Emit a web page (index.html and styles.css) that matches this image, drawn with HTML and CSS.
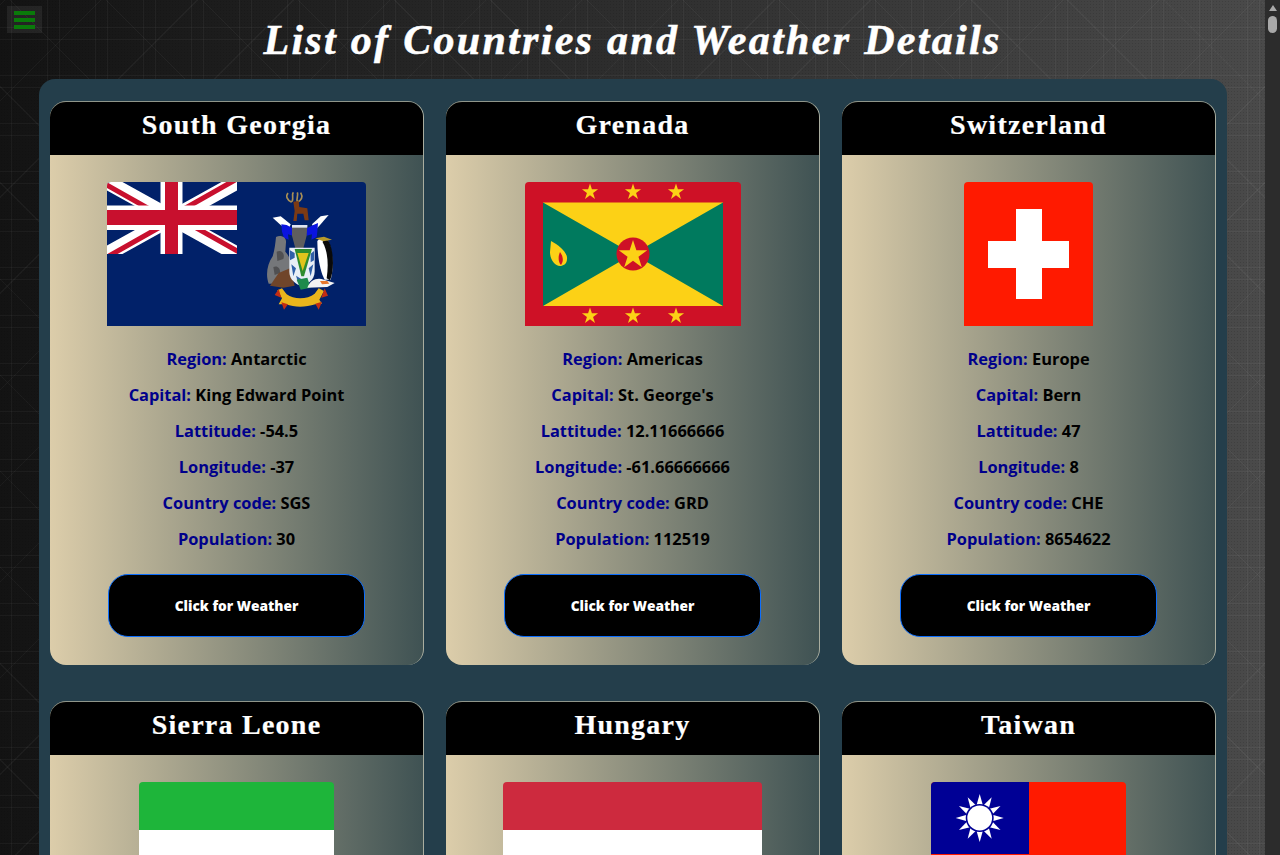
FILE: index.html
```html
<!DOCTYPE html>
<html lang="en">
<head>
  <meta charset="UTF-8" />
  <meta name="viewport" content="width=device-width, initial-scale=1.0" />
  <title>List of Countries and Weather Details</title>
  <link rel="stylesheet" href="styles.css">
</head>
<body>
  <div class="app">
    <main class="page">
      <button class="menu-btn" aria-label="Menu"><span></span><span></span><span></span></button>
      <h1 class="page-title">List of Countries and Weather Details</h1>

      <section class="country-list">
        <article class="card">
          <h2 class="card-title">South Georgia</h2>
          <div class="card-body">
            <svg class="flag" width="259" height="144" viewBox="0 0 259 144">
              <defs>
                <clipPath id="jack"><rect width="130" height="72"/></clipPath>
              </defs>
              <rect width="259" height="144" fill="#012169"/>
              <!-- union jack -->
              <g clip-path="url(#jack)">
                <path d="M0 0L130 72M130 0L0 72" stroke="#fff" stroke-width="15"/>
                <path d="M-2 2L60 37M132 70L70 35M128 -2L68 32M2 74L62 40" stroke="#c8102e" stroke-width="5"/>
                <path d="M53.5 0H75.5V23.5H130V48H75.5V72H53.5V48H0V23.5H53.5Z" fill="#fff"/>
                <path d="M58 0H71V28H130V43H71V72H58V43H0V28H58Z" fill="#c8102e"/>
              </g>
              <!-- coat of arms -->
              <g transform="translate(153 3) scale(.3333)">
                <path d="M95 52C82 46 76 34 84 24M96 50C102 40 94 30 100 22M112 52C124 46 130 36 122 23M112 50C108 40 116 32 112 22" fill="none" stroke="#a98f55" stroke-width="5"/>
                <path d="M100 50L116 48L118 66L142 70L146 106H134L130 86H112L110 108H100L104 78Z" fill="#7c3a14"/>
                <path d="M38 98L62 94L92 118L84 138L62 120Z" fill="#fff"/>
                <path d="M206 90L182 94L156 118L164 138L182 118Z" fill="#fff"/>
                <path d="M64 118L80 120L102 132L98 152L84 148L86 164L72 158L66 140Z" fill="#0a14e0"/>
                <path d="M174 114L160 120L136 132L140 152L156 148L154 164L170 156L172 140Z" fill="#0a14e0"/>
                <path d="M96 120H142L140 152L130 190H106L96 152Z" fill="#5e5e5e"/>
                <rect x="96" y="120" width="46" height="8" fill="#dfe4f2"/>
                <path d="M48 156C62 148 80 156 78 172L76 200C90 214 98 240 94 268L66 296H26C16 270 22 236 38 214C44 194 46 176 48 156Z" fill="#75777a"/>
                <path d="M50 200C64 192 76 206 70 222L52 228ZM40 246C52 240 62 250 60 264L44 270Z" fill="#505052"/>
                <path d="M30 302L56 264L90 250L104 302L70 308Z" fill="#70452a"/>
                <path d="M88 188L164 188V260C164 284 142 298 126 304C108 298 88 284 88 260Z" fill="#e8eef6"/>
                <path d="M90 196L104 204V218L90 226ZM152 206L162 198V226L152 232ZM94 238L108 250L100 274ZM146 250L160 238L152 274ZM108 272L124 282L114 292Z" fill="#2f5fa8"/>
                <path d="M104 192H156L132 274H124Z" fill="#2e8b2e"/>
                <path d="M112 204H146L128 258Z" fill="#e0c41c"/>
                <path d="M110 284L142 278L152 308L122 314Z" fill="#1d8a4c"/>
                <path d="M142 308C150 286 170 276 192 284L224 294L202 306Z" fill="#f3f3f3"/>
                <path d="M180 288H202L208 296L186 298Z" fill="#e8772c"/>
                <path d="M172 168C182 156 198 158 206 170C218 200 222 250 212 284H194C180 260 172 210 172 168Z" fill="#fff"/>
                <path d="M190 162C204 160 210 172 214 190C222 225 220 262 210 286L200 280C206 240 204 200 188 172Z" fill="#0a0a0a"/>
                <path d="M166 160L192 155L216 164L190 169Z" fill="#b89a2a"/>
                <path d="M52 316L66 310L80 328C102 344 142 344 164 326L176 310L192 318L178 344L186 356L166 358C136 368 104 368 78 358L56 358L66 340Z" fill="#eab51c"/>
                <path d="M44 330L56 312L64 338ZM194 310L204 332L184 338ZM64 352L84 358L72 374ZM166 356L186 350L176 374Z" fill="#c32d12"/>
              </g>
            </svg>
            <p class="info"><b>Region:</b> Antarctic</p>
            <p class="info"><b>Capital:</b> King Edward Point</p>
            <p class="info"><b>Lattitude:</b> -54.5</p>
            <p class="info"><b>Longitude:</b> -37</p>
            <p class="info"><b>Country code:</b> SGS</p>
            <p class="info"><b>Population:</b> 30</p>
            <button class="weather-btn">Click for Weather</button>
          </div>
        </article>

        <article class="card">
          <h2 class="card-title">Grenada</h2>
          <div class="card-body">
            <svg class="flag" width="216" height="144" viewBox="0 0 216 144">
              <defs>
                <polygon id="gd-star" fill="#fcd116" points="0,-1 .225,-.309 .951,-.309 .363,.118 .588,.809 0,.382 -.588,.809 -.363,.118 -.951,-.309 -.225,-.309"/>
              </defs>
              <rect width="216" height="144" fill="#ce1126"/>
              <rect x="18" y="20.5" width="180" height="103.5" fill="#fcd116"/>
              <path d="M18 20.5L108 72L18 124ZM198 20.5L108 72L198 124Z" fill="#007a5e"/>
              <circle cx="108" cy="72" r="16.5" fill="#ce1126"/>
              <use href="#gd-star" transform="translate(108 73) scale(15)"/>
              <use href="#gd-star" transform="translate(65 10) scale(8.5)"/>
              <use href="#gd-star" transform="translate(108 10) scale(8.5)"/>
              <use href="#gd-star" transform="translate(151 10) scale(8.5)"/>
              <use href="#gd-star" transform="translate(65 134) scale(8.5)"/>
              <use href="#gd-star" transform="translate(108 134) scale(8.5)"/>
              <use href="#gd-star" transform="translate(151 134) scale(8.5)"/>
              <path d="M26 59C34 63 43 71 42 77C42 82 38 84 35 84C30 84 25 78 25 70Z" fill="#fcd116"/>
              <path d="M35 70C38 74 39 79 36 83C33 80 33 74 35 70Z" fill="#ce1126"/>
            </svg>
            <p class="info"><b>Region:</b> Americas</p>
            <p class="info"><b>Capital:</b> St. George's</p>
            <p class="info"><b>Lattitude:</b> 12.11666666</p>
            <p class="info"><b>Longitude:</b> -61.66666666</p>
            <p class="info"><b>Country code:</b> GRD</p>
            <p class="info"><b>Population:</b> 112519</p>
            <button class="weather-btn">Click for Weather</button>
          </div>
        </article>

        <article class="card">
          <h2 class="card-title">Switzerland</h2>
          <div class="card-body">
            <svg class="flag" width="129" height="144" viewBox="0 0 129 144">
              <rect width="129" height="144" fill="#ff1a00"/>
              <path d="M52 27H78V59H105V86H78V117H52V86H24V59H52Z" fill="#fff"/>
            </svg>
            <p class="info"><b>Region:</b> Europe</p>
            <p class="info"><b>Capital:</b> Bern</p>
            <p class="info"><b>Lattitude:</b> 47</p>
            <p class="info"><b>Longitude:</b> 8</p>
            <p class="info"><b>Country code:</b> CHE</p>
            <p class="info"><b>Population:</b> 8654622</p>
            <button class="weather-btn">Click for Weather</button>
          </div>
        </article>

        <article class="card">
          <h2 class="card-title">Sierra Leone</h2>
          <div class="card-body">
            <svg class="flag" width="195" height="144" viewBox="0 0 195 144">
              <rect width="195" height="48" fill="#1eb53a"/>
              <rect y="48" width="195" height="48" fill="#fff"/>
              <rect y="96" width="195" height="48" fill="#0072c6"/>
            </svg>
          </div>
        </article>

        <article class="card">
          <h2 class="card-title">Hungary</h2>
          <div class="card-body">
            <svg class="flag" width="259" height="144" viewBox="0 0 259 144">
              <rect width="259" height="48" fill="#cd2a3e"/>
              <rect y="48" width="259" height="48" fill="#fff"/>
              <rect y="96" width="259" height="48" fill="#436f4d"/>
            </svg>
          </div>
        </article>

        <article class="card">
          <h2 class="card-title">Taiwan</h2>
          <div class="card-body">
            <svg class="flag" width="195" height="144" viewBox="0 0 195 144">
              <defs>
                <polygon id="tw-ray" fill="#fff" points="0,-24 3.4,-12 -3.4,-12"/>
              </defs>
              <rect width="195" height="144" fill="#ff1a00"/>
              <rect width="98" height="72" fill="#000095"/>
              <g transform="translate(48.7 36)">
                <use href="#tw-ray"/>
                <use href="#tw-ray" transform="rotate(30)"/>
                <use href="#tw-ray" transform="rotate(60)"/>
                <use href="#tw-ray" transform="rotate(90)"/>
                <use href="#tw-ray" transform="rotate(120)"/>
                <use href="#tw-ray" transform="rotate(150)"/>
                <use href="#tw-ray" transform="rotate(180)"/>
                <use href="#tw-ray" transform="rotate(210)"/>
                <use href="#tw-ray" transform="rotate(240)"/>
                <use href="#tw-ray" transform="rotate(270)"/>
                <use href="#tw-ray" transform="rotate(300)"/>
                <use href="#tw-ray" transform="rotate(330)"/>
                <circle r="14" fill="#000095"/>
                <circle r="12.4" fill="#fff"/>
              </g>
            </svg>
          </div>
        </article>
      </section>
    </main>

    <div class="scrollbar">
      <span class="scroll-arrow"></span>
      <span class="scroll-thumb"></span>
    </div>
  </div>
</body>
</html>
```

FILE: styles.css
```css
html, body {
  margin: 0;
  padding: 0;
  width: 100%;
  height: 100%;
  overflow: hidden;
  font-family: 'Open Sans', 'Noto Sans', sans-serif;
}

.app {
  display: flex;
  height: 100%;
}

.page {
  position: relative;
  flex: 1;
  min-width: 0;
  overflow: hidden;
  background:
    radial-gradient(rgba(0, 0, 0, 0.12) 0.6px, transparent 0.8px) 0 0 / 3px 3px,
    repeating-linear-gradient(45deg, transparent 0 67px, rgba(255, 255, 255, 0.04) 67px 68px),
    repeating-linear-gradient(-45deg, transparent 0 67px, rgba(255, 255, 255, 0.04) 67px 68px),
    repeating-linear-gradient(90deg, transparent 0 11px, rgba(255, 255, 255, 0.04) 11px 12px, transparent 12px 47px, rgba(255, 255, 255, 0.04) 47px 48px),
    repeating-linear-gradient(0deg, transparent 0 11px, rgba(255, 255, 255, 0.04) 11px 12px, transparent 12px 47px, rgba(255, 255, 255, 0.04) 47px 48px),
    linear-gradient(to right, #131313, #2e2e2e 50%, #4a4a4a);
}

.menu-btn {
  position: absolute;
  top: 6px;
  left: 7px;
  width: 35px;
  height: 27px;
  padding: 5px 7px 4px;
  border: none;
  background: rgba(255, 255, 255, 0.07);
  display: flex;
  flex-direction: column;
  justify-content: space-between;
}
.menu-btn span {
  display: block;
  height: 4px;
  background: #0a7a0a;
}

.page-title {
  margin: 0;
  height: 79px;
  line-height: 81px;
  text-align: center;
  color: #fff;
  font-family: 'Liberation Serif', serif;
  font-style: italic;
  font-weight: bold;
  font-size: 42px;
  letter-spacing: 2.3px;
  -webkit-text-stroke: 0.5px #fff;
}

.country-list {
  margin: 0 38px 0 39px;
  padding: 22px 11px;
  background: #243e4b;
  border-radius: 16px;
  display: grid;
  grid-template-columns: repeat(3, 1fr);
  gap: 36px 22px;
}

.card {
  border-top: 1px solid #8f958a;
  border-right: 1px solid #a9ad9f;
  border-radius: 16px;
  overflow: hidden;
  background: linear-gradient(to right, #dccdaa, #3f5253);
}

.card-title {
  margin: 0;
  height: 53px;
  line-height: 46px;
  background: #000;
  color: #fff;
  text-align: center;
  font-family: 'Liberation Serif', serif;
  font-weight: bold;
  font-size: 28px;
  letter-spacing: 1.25px;
  -webkit-text-stroke: 0.2px #fff;
}

.card-body {
  display: flex;
  flex-direction: column;
  align-items: center;
  padding: 27px 0 28px;
}

.flag {
  display: block;
  border-radius: 4px 4px 0 0;
  margin-bottom: 15px;
}

.info {
  margin: 0;
  line-height: 36px;
  font-size: 16.4px;
  font-weight: 700;
  color: #000;
}
.info b {
  font-weight: 700;
  color: #00008b;
}

.weather-btn {
  margin-top: 17px;
  width: 257px;
  height: 63px;
  border: 1px solid #0d6efd;
  border-radius: 20px;
  background: #000;
  color: #fff;
  font-family: 'Open Sans', sans-serif;
  font-size: 13.7px;
  font-weight: 800;
}

.scrollbar {
  flex: 0 0 15px;
  background: #2c2c2c;
  display: flex;
  flex-direction: column;
  align-items: center;
  padding-top: 5px;
  gap: 5px;
}
.scroll-arrow {
  width: 0;
  height: 0;
  border-left: 4px solid transparent;
  border-right: 4px solid transparent;
  border-bottom: 6px solid #a8a8a8;
}
.scroll-thumb {
  width: 9px;
  height: 17px;
  border-radius: 5px;
  background: #a8a8a8;
}
```
